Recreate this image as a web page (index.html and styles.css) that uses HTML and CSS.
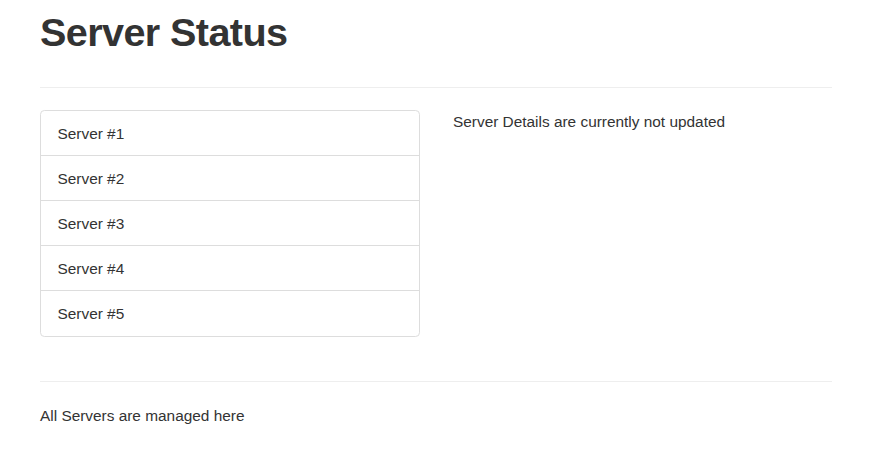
FILE: index.html
```html
<!DOCTYPE html>
<html>
<head>
<meta charset="utf-8">
<link rel="stylesheet" href="styles.css">
</head>
<body>
<div class="container">
  <h1 class="title">Server Status</h1>
  <hr class="rule">
  <div class="row">
    <div class="col">
      <ul class="list-group">
        <li class="list-item">Server #1</li>
        <li class="list-item">Server #2</li>
        <li class="list-item">Server #3</li>
        <li class="list-item">Server #4</li>
        <li class="list-item">Server #5</li>
      </ul>
    </div>
    <div class="col">
      <p class="details">Server Details are currently not updated</p>
    </div>
  </div>
  <hr class="rule">
  <p class="footer-text">All Servers are managed here</p>
</div>
</body>
</html>
```

FILE: styles.css
```css
html, body {
  margin: 0;
  padding: 0;
  background: #fff;
}
body {
  font-family: "Liberation Sans", Arial, sans-serif;
  font-size: 15.4px;
  line-height: 22px;
  color: #333;
}
.container {
  width: 792px;
  margin-left: 40px;
}
.title {
  font-size: 39.6px;
  line-height: 43.6px;
  font-weight: 700;
  margin: 11px 0 32.4px;
  letter-spacing: -0.6px;
}
.rule {
  margin: 22px 0;
  border: 0;
  border-top: 1px solid #eee;
  height: 0;
}
.row {
  display: grid;
  grid-template-columns: 1fr 1fr;
  column-gap: 33px;
  align-items: start;
}
.list-group {
  list-style: none;
  margin: 0 0 22px;
  padding: 0;
  width: 380px;
}
.list-item {
  padding: 12px 16.5px 10px;
  border: 1px solid #ddd;
  margin-bottom: -1px;
  line-height: 22px;
}
.list-item:first-child {
  border-top-left-radius: 4.4px;
  border-top-right-radius: 4.4px;
}
.list-item:last-child {
  margin-bottom: 0;
  padding-bottom: 11px;
  border-bottom-left-radius: 4.4px;
  border-bottom-right-radius: 4.4px;
}
.details {
  margin: 0;
  padding-top: 1px;
}
.footer-text {
  margin: 0;
  padding-top: 1px;
}
```
